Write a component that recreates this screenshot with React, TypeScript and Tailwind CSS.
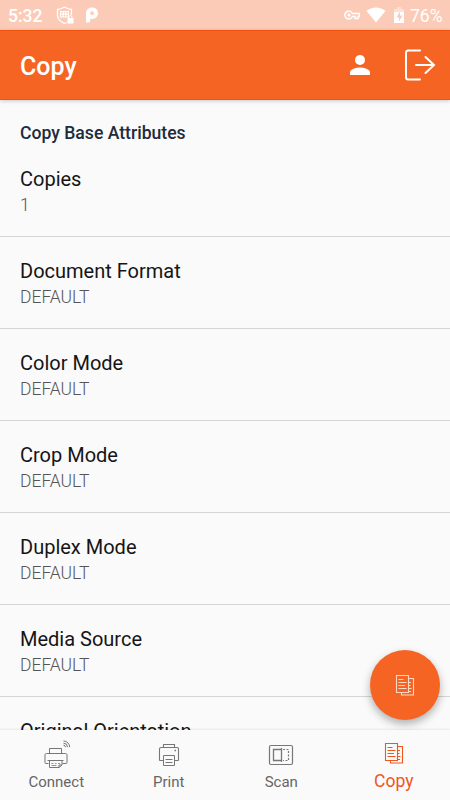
import type { ReactNode } from "react";

const attributes = [
    { name: "Copies", value: "1" },
    { name: "Document Format", value: "DEFAULT" },
    { name: "Color Mode", value: "DEFAULT" },
    { name: "Crop Mode", value: "DEFAULT" },
    { name: "Duplex Mode", value: "DEFAULT" },
    { name: "Media Source", value: "DEFAULT" },
    { name: "Original Orientation", value: "DEFAULT" },
];

function CopyIcon({ className }: { className?: string }) {
    return (
        <svg viewBox="0 0 20 22" fill="none" stroke="currentColor" className={className}>
            <path d="M1.5 1.5h12v17h-12z" strokeWidth="1.1" />
            <path d="M13.5 4.5h5v16.5h-12v-2.5" strokeWidth="1.1" />
            <path d="M3.5 5.5h5M3.5 8.5h8M3.5 11.5h6.5M3.5 14.5h8M14 8.5h2M14 11.5h1.5M14 14.5h2.5M14 17.5h2" />
        </svg>
    );
}

function ConnectIcon() {
    return (
        <svg viewBox="0 0 28 30" fill="none" stroke="currentColor" className="ml-[2px] h-[30px] w-7">
            <path d="M6.5 13.5v-5h12v5M5.5 23.5H3c-.7 0-1-.3-1-1V15c0-1 .5-1.5 1.5-1.5h19c1 0 1.5.5 1.5 1.5v7.5c0 .7-.3 1-1 1h-3.5" />
            <path d="M4.5 20.5h16M6.5 20.5v7h9.5l3-2.5v-4.5M19 25h-3v2.5" />
            <path d="M8.5 23.5h2M12 23.5h1.5M15 23.5h2M8.5 25.5h5" strokeWidth=".8" />
            <path d="M20.5 5.2a2 2 0 0 1 2 2M20.5 3.2a4 4 0 0 1 4 4M20.5 1a6.2 6.2 0 0 1 6.2 6.2" />
        </svg>
    );
}

function PrintIcon() {
    return (
        <svg viewBox="0 0 22 24" fill="none" stroke="currentColor" className="h-6 w-[22px]">
            <path d="M5.5 4V1.5h11V4M5 17.5H2c-.5 0-.5-.3-.5-.5V6c0-1 .5-1.5 1.5-1.5h16c1 0 1.5.5 1.5 1.5v11c0 .3-.2.5-.5.5h-3" strokeWidth="1.1" />
            <path d="M5.5 12.5h11v10h-11zM7.5 16.5h7M7.5 19.5h7" />
            <path d="M16.5 7.5H18" strokeWidth="1.4" />
        </svg>
    );
}

function ScanIcon() {
    return (
        <svg viewBox="0 0 26 22" fill="none" stroke="currentColor" className="h-[22px] w-[26px]">
            <rect x="1.5" y="1.5" width="23" height="19" rx="1.5" strokeWidth="1.2" />
            <path d="M13 5.5H5.5v11H13M13.5 4v14" strokeWidth="1.3" />
            <path d="M15 5.5h5.5v11H15" strokeWidth="1.2" strokeDasharray="2 1.5" />
        </svg>
    );
}

function StatusBar() {
    return (
        <div className="flex h-[30px] items-center bg-[#fbcbb7] px-2 text-[17.5px] leading-[30px] text-white">
            <span className="w-12 pt-[2px] font-medium">5:32</span>
            <svg viewBox="0 0 18 18" className="h-[18px] w-[18px]" fill="none" stroke="white">
                <path d="M15.5 9V3.5C13 3.3 11 2.5 8.5 1 6 2.5 4 3.3 1.5 3.5v6c0 3.5 3 6 7 8l2-1" strokeWidth="1.3" />
                <path d="M4.5 5.5h8V11h-8zM4.500 8.200h8M7.200 5.500V11M9.800 5.500V11" strokeWidth="1.2" />
                <path d="M11.5 12h6v5.5h-6z" fill="white" stroke="none" />
                <path d="M12.8 12.5v-1.3a1.600 1.600 0 0 1 3.200 0v1.300" />
            </svg>
            <svg viewBox="0 0 12.2 16" className="ml-3 h-4 w-3" fill="white">
                <path fillRule="evenodd" d="M0 15.5v-9C0 2.5 2.500.3 6 .3s6.200 2.200 6.200 5.700-2.600 6-6 6c-1 0-1.500-.2-2-.5V14c0 .9-.6 1.500-1.600 1.500zM6.200 4.300a1.900 1.900 0 1 0 0 3.800 1.900 1.900 0 0 0 0-3.800z" />
            </svg>
            <svg viewBox="0 0 16 10" className="ml-auto h-[10px] w-4" fill="none" stroke="white" strokeWidth="1.5">
                <path d="M8.5 3.5A4 4 0 1 0 8.5 6.5H11v2h3v-2h1.3v-3z" />
                <circle cx="5" cy="5" r="1" />
            </svg>
            <svg viewBox="0 0 20 16" className="ml-[6px] h-4 w-5" fill="white">
                <path d="M10 15.5.5 4C3 1.700 6.300.5 10 .5s7 1.200 9.500 3.500z" />
            </svg>
            <svg viewBox="0 0 10 16" className="ml-2 h-4 w-[10px]" fill="white">
                <path opacity=".4" d="M3 0h4v2h3v3H0V2h3z" />
                <path fillRule="evenodd" d="M0 5h10v11H0zM6 4.500 2.500 10.500H5v4l3.500-6H6z" />
            </svg>
            <span className="ml-[6px] w-8 pt-[2px] whitespace-nowrap">76%</span>
        </div>
    );
}

function Header() {
    return (
        <header className="z-10 flex h-[70px] shrink-0 items-center border-y border-[#f4520d] bg-[#f56423] pr-[14px] pl-5 text-white shadow-[0_1px_4px_rgba(0,0,0,0.2)]">
            <h1 className="pt-[3px] text-[25px] font-medium">Copy</h1>
            <svg viewBox="0 0 20 20" className="ml-auto h-5 w-5" fill="white">
                <circle cx="10" cy="5" r="5" />
                <path d="M0 20v-2.5C0 14.2 6 12.5 10 12.5s10 1.700 10 5V20z" />
            </svg>
            <svg viewBox="0 0 32 32" className="ml-[34px] h-8 w-8" fill="none" stroke="white" strokeWidth="2" strokeLinecap="round">
                <path d="M16 1.5H4C2.5 1.5 2 2.5 2 4v24c0 1.5.5 2.5 2 2.5h12M12 16h18M21.5 8l8.5 8-8.5 8" />
            </svg>
        </header>
    );
}

function NavItem({ label, icon, active }: { label: string; icon: ReactNode; active?: boolean }) {
    return (
        <div className={active ? "flex flex-1 flex-col items-center text-[#f0571c]" : "flex flex-1 flex-col items-center text-[#777]"}>
            <div className={active ? "flex h-[30px] items-center pb-1" : "flex h-[30px] items-center"}>{icon}</div>
            <span className={active ? "text-[17.5px] leading-[22px]" : "text-[15px] leading-6 text-[#666]"}>{label}</span>
        </div>
    );
}

export default function App() {
    return (
        <div className="flex h-[800px] w-[450px] flex-col overflow-hidden bg-[#fafafa] font-['Roboto',sans-serif]">
            <StatusBar />
            <Header />
            <main className="relative min-h-0 flex-1">
                <div className="h-full overflow-hidden">
                    <h2 className="h-[45px] pt-[21px] pl-5 text-[17.6px] leading-6 font-medium text-[#222b3a]">
                        Copy Base Attributes
                    </h2>
                    {attributes.map((item) => (
                        <div key={item.name} className="h-[92px] border-b border-[#d5d5d5] pt-[21px] pl-5">
                            <div className="text-[20px] leading-[26px] text-[#151515]">{item.name}</div>
                            <div className="pt-px text-[17.5px] leading-6 font-light text-[#555]">{item.value}</div>
                        </div>
                    ))}
                </div>
                <button className="absolute right-[10px] bottom-[10px] flex h-[70px] w-[70px] items-center justify-center rounded-full bg-[#f56423] text-[#ffd9c5] shadow-[0_4px_8px_rgba(0,0,0,0.3)]">
                    <CopyIcon className="h-[22px] w-5" />
                </button>
            </main>
            <nav className="z-10 flex h-[70px] shrink-0 bg-[#fafafa] pt-[10px] shadow-[0_-1px_2px_rgba(0,0,0,0.08)]">
                <NavItem label="Connect" icon={<ConnectIcon />} />
                <NavItem label="Print" icon={<PrintIcon />} />
                <NavItem label="Scan" icon={<ScanIcon />} />
                <NavItem label="Copy" icon={<CopyIcon className="h-[22px] w-5" />} active />
            </nav>
        </div>
    );
}
